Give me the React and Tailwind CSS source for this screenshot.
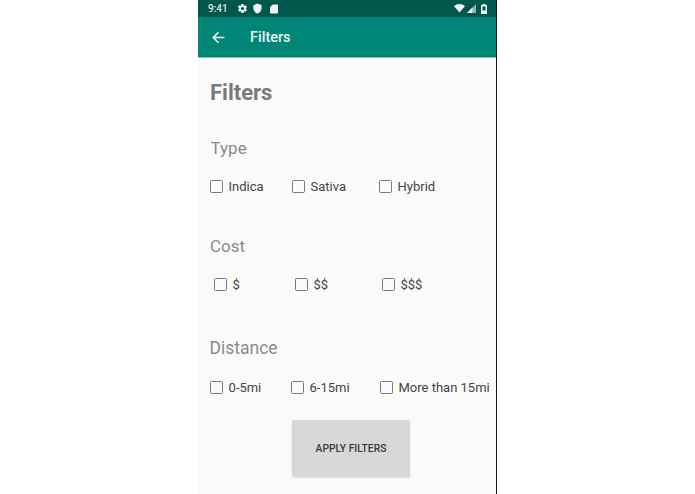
const Box = () => (
  <span className="w-[13px] h-[13px] shrink-0 rounded-[1.5px] border-[1.5px] border-[#7a7a7a] mb-[1px]" />
);

const Check = ({ label, width }) => (
  <div className={`flex items-center gap-[5.500px] ${width}`}>
    <Box />
    <span className="text-[13px] leading-[16px] text-[#444444] whitespace-nowrap">{label}</span>
  </div>
);

export default function App() {
  return (
    <div className="w-[695px] h-[494px] bg-white overflow-hidden pl-[198px] font-['Roboto',sans-serif]">
      <div className="w-[298.500px] h-[494px] bg-[#fafafa] border-r-[1.500px] border-[#1a1a1a] flex flex-col">
        <div className="h-[17px] bg-[#00574b] flex items-center pl-[10px] pr-[9px] text-white">
          <span className="text-[10px] leading-none font-medium text-[#dcebe8]">9:41</span>
          <svg className="ml-[9px]" width="11" height="11" viewBox="0 0 24 24" fill="#eef5f3">
            <path d="M19.4 13c.1-.3.1-.7.1-1s0-.7-.1-1l2.1-1.6c.2-.2.2-.4.1-.6l-2-3.5c-.1-.2-.4-.3-.6-.2l-2.5 1c-.5-.4-1.100-.7-1.700-1L14.400 2.400c0-.2-.2-.4-.5-.4h-4c-.2 0-.4.2-.5.4L9 5.100c-.6.2-1.100.6-1.700 1l-2.500-1c-.2-.1-.5 0-.6.200l-2 3.500c-.1.200-.1.500.1.600L4.500 11c0 .3-.1.700-.1 1s0 .7.100 1l-2.100 1.600c-.2.200-.2.400-.1.600l2 3.500c.1.200.4.300.6.200l2.500-1c.5.400 1.100.700 1.700 1l.4 2.600c0 .2.200.4.500.4h4c.2 0 .4-.2.500-.4l.4-2.600c.6-.2 1.100-.6 1.700-1l2.500 1c.2.100.5 0 .6-.2l2-3.500c.1-.2.100-.5-.1-.6L19.400 13zM12 15.500a3.500 3.500 0 1 1 0-7 3.500 3.500 0 0 1 0 7z" />
          </svg>
          <svg className="ml-[4.500px]" width="11" height="11" viewBox="0 0 24 24" fill="#eef5f3">
            <path d="M12 1 3 5v6c0 5.600 3.800 10.700 9 12 5.200-1.300 9-6.400 9-12V5l-9-4z" />
          </svg>
          <svg className="ml-[4.500px]" width="12" height="12" viewBox="0 0 24 24" fill="#eef5f3">
            <path d="M18 3h-8L4 8v11c0 1.100.9 2 2 2h12c1.100 0 2-.9 2-2V5c0-1.100-.9-2-2-2z" />
          </svg>
          <div className="ml-auto flex items-center gap-[2px]">
            <svg width="11" height="9" viewBox="0 0 24 20" fill="#f3f8f7">
              <path d="M12 19 0 5c3-3 7.400-5 12-5s9 2 12 5L12 19z" />
            </svg>
            <svg width="9" height="9" viewBox="0 0 20 20">
              <path d="M20 0v20H0L20 0z" fill="#8fb0aa" />
              <path d="M12 8v12H0L12 8z" fill="#f3f8f7" />
            </svg>
            <svg className="ml-[3px]" width="6" height="10" viewBox="0 0 12 20">
              <path d="M3 2V0h6v2h3v18H0V2h3z" fill="#f3f8f7" />
              <path d="M3 5h6v8H3z" fill="#00574b" />
            </svg>
          </div>
        </div>

        <div className="h-[41px] bg-[#008577] border-b border-[#7cc4ba] flex items-center pt-[1px] pl-[14px] text-[#eaf5f3]">
          <svg width="13" height="13" viewBox="0 0 13 13" fill="none" stroke="currentColor" strokeWidth="1.600">
            <path d="M12.500 6.500H1.500M6.500 1.200 1.300 6.500l5.200 5.300" />
          </svg>
          <span className="ml-[25px] text-[14.500px] font-medium">Filters</span>
        </div>

        <h1 className="ml-[12px] mt-[22px] text-[22px] leading-[26px] font-bold text-[#7a7a7a]">Filters</h1>

        <h2 className="ml-[12.500px] mt-[32px] text-[17px] leading-[20px] text-[#8a8a8a]">Type</h2>
        <div className="flex ml-[12px] mt-[21px]">
          <Check label="Indica" width="w-[82px]" />
          <Check label="Sativa" width="w-[87px]" />
          <Check label="Hybrid" width="w-[100px]" />
        </div>

        <h2 className="ml-[12px] mt-[41px] text-[17px] leading-[20px] text-[#8a8a8a]">Cost</h2>
        <div className="flex ml-[16px] mt-[21px]">
          <Check label="$" width="w-[81px]" />
          <Check label="$$" width="w-[87px]" />
          <Check label="$$$" width="w-[100px]" />
        </div>

        <h2 className="ml-[11.500px] mt-[45px] text-[17.500px] leading-[20px] text-[#8a8a8a]">Distance</h2>
        <div className="flex ml-[12px] mt-[22px]">
          <Check label="0-5mi" width="w-[81px]" />
          <Check label="6-15mi" width="w-[89px]" />
          <Check label="More than 15mi" width="w-[110px]" />
        </div>

        <button className="ml-[94px] mt-[24px] w-[118px] h-[57px] rounded-[2px] bg-[#d6d7d7] shadow-[0_1px_2px_rgba(0,0,0,0.12)] text-[10.300px] font-medium text-[#3a3a3a]">
          APPLY FILTERS
        </button>
      </div>
    </div>
  );
}
